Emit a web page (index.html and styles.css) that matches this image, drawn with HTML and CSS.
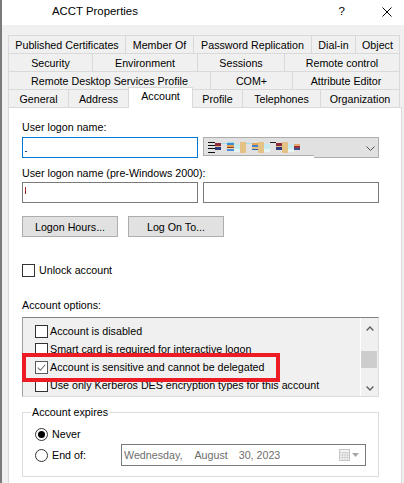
FILE: index.html
```html
<!DOCTYPE html>
<html>
<head>
<meta charset="utf-8">
<link rel="stylesheet" href="styles.css">
</head>
<body>
<div class="window">
  <header class="titlebar">
    <span class="title">ACCT Properties</span>
    <span class="help">?</span>
    <svg class="close" viewBox="0 0 10 10"><path d="M0.5 0.5L9.5 9.5M9.5 0.5L0.5 9.5" stroke="#000" stroke-width="1" fill="none"/></svg>
  </header>

  <div class="tabs">
    <div class="tabrow r1">
      <div class="tab">Published Certificates</div>
      <div class="tab">Member Of</div>
      <div class="tab">Password Replication</div>
      <div class="tab">Dial-in</div>
      <div class="tab">Object</div>
    </div>
    <div class="tabrow r2">
      <div class="tab">Security</div>
      <div class="tab">Environment</div>
      <div class="tab">Sessions</div>
      <div class="tab">Remote control</div>
    </div>
    <div class="tabrow r3">
      <div class="tab">Remote Desktop Services Profile</div>
      <div class="tab">COM+</div>
      <div class="tab">Attribute Editor</div>
    </div>
    <div class="tabrow r4">
      <div class="tab">General</div>
      <div class="tab">Address</div>
      <div class="tab active">Account</div>
      <div class="tab">Profile</div>
      <div class="tab">Telephones</div>
      <div class="tab">Organization</div>
    </div>
  </div>

  <div class="panel">
    <div class="label">User logon name:</div>
    <div class="field-row">
      <div class="input focus"><span class="mark-blue"></span></div>
      <div class="combo">
        <div class="redact">
          <span class="px px-menu"></span>
          <span class="px px-rn"></span>
          <span class="px px-line"></span>
          <span class="px px-st"></span>
          <span class="px px-cy"></span>
          <span class="px px-tan"></span>
          <span class="px px-line"></span>
          <span class="px px-st2"></span>
          <span class="px px-tan"></span>
          <span class="px px-cy"></span>
          <span class="px px-top"></span>
          <span class="px px-rn"></span>
          <span class="px px-tan"></span>
          <span class="px px-cy"></span>
          <span class="px px-rn2"></span>
        </div>
        <svg class="combo-chev" viewBox="0 0 9 5"><path d="M0.5 0.5L4.5 4.5L8.5 0.5" fill="none" stroke="#505050" stroke-width="1"/></svg>
        <span class="combo-notch"></span>
      </div>
    </div>

    <div class="label label-2">User logon name (pre-Windows 2000):</div>
    <div class="field-row row-2">
      <div class="input"><span class="mark-red"></span></div>
      <div class="input"></div>
    </div>

    <div class="btn-row">
      <div class="btn">Logon Hours...</div>
      <div class="btn">Log On To...</div>
    </div>

    <div class="check-row">
      <span class="chk"></span>
      <span class="check-text">Unlock account</span>
    </div>

    <div class="label label-opts">Account options:</div>
    <div class="listbox">
      <div class="items">
        <div class="item"><span class="chk small"></span><span class="item-text">Account is disabled</span></div>
        <div class="item"><span class="chk small"></span><span class="item-text">Smart card is required for interactive logon</span></div>
        <div class="item"><span class="chk small checked"><svg viewBox="0 0 12 12"><path d="M2 6.2L4.8 9L10 3" fill="none" stroke="#6a6a6a" stroke-width="1.1"/></svg></span><span class="item-text">Account is sensitive and cannot be delegated</span></div>
        <div class="item"><span class="chk small"></span><span class="item-text">Use only Kerberos DES encryption types for this account</span></div>
      </div>
      <div class="scroll">
        <div class="sb-up"><svg viewBox="0 0 8 5"><path d="M0.6 4.4L4 1L7.4 4.4" fill="none" stroke="#606060" stroke-width="1.4"/></svg></div>
        <div class="sb-track"><div class="sb-thumb"></div></div>
        <div class="sb-down"><svg viewBox="0 0 8 5"><path d="M0.6 0.6L4 4L7.4 0.6" fill="none" stroke="#606060" stroke-width="1.4"/></svg></div>
      </div>
      <div class="highlight"></div>
    </div>

    <fieldset class="group">
      <legend class="legend">Account expires</legend>
      <div class="radio-row">
        <span class="radio on"></span>
        <span class="radio-text">Never</span>
      </div>
      <div class="radio-row row-end">
        <div class="end-label">
          <span class="radio"></span>
          <span class="radio-text">End of:</span>
        </div>
        <div class="date">
          <span>Wednesday,</span>
          <span class="d-month">August</span>
          <span class="d-day">30, 2023</span>
          <svg class="cal" viewBox="0 0 11 12">
            <rect x="0.5" y="0.5" width="10" height="11" fill="#f3f3f3" stroke="#c6c6c6"/>
            <path d="M1 3.5H10M1 6H10M1 8.5H10M3.5 3V11M6 3V11M8.5 3V11" stroke="#d4d4d4" stroke-width="1" fill="none"/>
          </svg>
          <svg class="drop" viewBox="0 0 7 4"><path d="M0 0H7L3.5 4Z" fill="#a6a6a6"/></svg>
        </div>
      </div>
    </fieldset>
  </div>
</div>
</body>
</html>
```

FILE: styles.css
```css
html, body {
  margin: 0;
  padding: 0;
}
body {
  width: 404px;
  height: 483px;
  overflow: hidden;
  background: #f0f0f0;
  font-family: "Liberation Sans", Arial, sans-serif;
  font-size: 10.7px;
  color: #000;
}
.window {
  height: 483px;
  box-sizing: border-box;
  border-left: 2px solid #7a7a7a;
}

/* title bar */
.titlebar {
  height: 25px;
  background: #fff;
  display: flex;
  align-items: flex-start;
  line-height: 22px;
  font-size: 11.4px;
}
.title {
  margin-left: 50px;
}
.help {
  margin-left: auto;
  margin-right: 37px;
  font-size: 11.5px;
}
.close {
  width: 10px;
  height: 10px;
  margin-top: 7px;
  margin-right: 12px;
}

/* tabs */
.tabs {
  margin: 10px 0 0 6px;
  width: 392px;
}
.tabrow {
  display: grid;
  height: 18px;
}
.r1 { grid-template-columns: 117px 68px 118px 44px 45px; }
.r2 { grid-template-columns: 84px 105px 87px 116px; }
.r3 { grid-template-columns: 202px 82px 108px; }
.r4 { grid-template-columns: 60px 60px 64px 50px 78px 80px; }
.tab {
  box-sizing: border-box;
  border-top: 1px solid #d9d9d9;
  border-left: 1px solid #d9d9d9;
  text-align: center;
  line-height: 18px;
  white-space: nowrap;
  overflow: hidden;
}
.tab:last-child {
  border-right: 1px solid #d9d9d9;
}
.tab.active {
  position: relative;
  z-index: 1;
  background: #fff;
  margin-top: -2px;
  margin-right: -1px;
  height: 21px;
  border-right: 1px solid #d9d9d9;
  line-height: 17px;
}

/* panel */
.panel {
  margin-left: 6px;
  width: 394px;
  height: 390px;
  box-sizing: border-box;
  border: 1px solid #d9d9d9;
  background: #fff;
  padding: 13px 0 0 13px;
}
.label {
  height: 13px;
  line-height: 13px;
  white-space: nowrap;
}
.label-2 { margin-top: 9px; }
.label-opts { margin-top: 22px; }

.field-row {
  display: flex;
  gap: 5px;
  margin-top: 3px;
}
.field-row.row-2 { margin-top: 2px; }
.input {
  width: 176px;
  height: 21px;
  box-sizing: border-box;
  border: 1px solid #7a7a7a;
  background: #fff;
  position: relative;
}
.input.focus { border-color: #0078d7; }
.mark-blue {
  display: block;
  width: 2px;
  height: 1px;
  margin: 13px 0 0 2px;
  background: #1b3f8f;
}
.mark-red {
  display: block;
  width: 1px;
  height: 7px;
  margin: 4px 0 0 2px;
  background: #9b2a2a;
}

.combo {
  position: relative;
  width: 176px;
  height: 21px;
  box-sizing: border-box;
  border: 1px solid #adadad;
  background: #e1e1e1;
  display: flex;
  align-items: center;
}
.redact {
  display: flex;
  align-items: flex-start;
  height: 12px;
  margin-left: 4px;
  margin-top: 1px;
}
.px {
  display: block;
  width: 6px;
  height: 11px;
}
.px-menu {
  width: 7px;
  background: linear-gradient(#111 0 1px, transparent 1px 3px, #111 3px 4px, transparent 4px 6px, #111 6px 7px, transparent 7px 10px, #111 10px 11px);
}
.px-rn {
  background: linear-gradient(transparent 0 1px, #8a2b37 1px 4px, #e6b784 4px 5px, #2c3c7c 5px 8px, transparent 8px);
}
.px-rn2 {
  background: linear-gradient(transparent 0 2px, #e3a76d 2px 4px, #9a2f3b 4px 6px, #3a4a8a 6px 8px, transparent 8px);
}
.px-line {
  background: linear-gradient(transparent 0 1px, #a7dbe8 1px 2px, transparent 2px);
}
.px-st {
  width: 7px;
  background: linear-gradient(#a7dbe8 0 1px, #3b8ad0 1px 3px, #e9a24c 3px 5px, #8c3b2b 5px 6px, #f1d8a6 6px 7px, #4a90d6 7px 9px, transparent 9px);
}
.px-st2 {
  background: linear-gradient(transparent 0 1px, #e9a24c 1px 3px, #4a7fd0 3px 5px, #e0c08a 5px 7px, #2f5fa0 7px 8px, transparent 8px);
}
.px-cy {
  background: linear-gradient(transparent 0 2px, #c6eaee 2px 7px, #e6f5f3 7px 10px, transparent 10px);
}
.px-tan {
  background: #e4c286;
}
.px-top {
  background: linear-gradient(#222 0 1px, transparent 1px);
}
.combo-chev {
  width: 9px;
  height: 5px;
  margin-left: auto;
  margin-right: 3px;
  margin-top: 1px;
}
.combo-notch {
  position: absolute;
  left: -1px;
  bottom: -1px;
  width: 111px;
  height: 2px;
  background: #fff;
  border-top: 1px solid #adadad;
}

/* buttons */
.btn-row {
  display: flex;
  gap: 10px;
  margin-top: 13px;
}
.btn {
  width: 96px;
  height: 21px;
  box-sizing: border-box;
  border: 1px solid #adadad;
  background: #e1e1e1;
  display: flex;
  align-items: center;
  justify-content: center;
  white-space: nowrap;
}

/* checkboxes */
.check-row {
  display: flex;
  align-items: center;
  height: 13px;
  margin-top: 27px;
}
.chk {
  display: block;
  width: 13px;
  height: 13px;
  box-sizing: border-box;
  border: 1px solid #333;
  background: #fff;
  flex: none;
}
.chk.checked {
  border-color: #5a5a5a;
}
.chk svg {
  display: block;
  width: 11px;
  height: 11px;
}
.check-text {
  margin-left: 4px;
  line-height: 13px;
}

/* list */
.listbox {
  position: relative;
  margin-top: 5px;
  width: 357px;
  height: 80px;
  box-sizing: border-box;
  border: 1px solid;
  border-color: #828282 #dcdcdc #dcdcdc #a0a0a0;
  background: #f0f0f0;
  display: flex;
}
.items {
  flex: 1;
  padding-top: 4px;
  overflow: hidden;
}
.item {
  display: flex;
  align-items: center;
  height: 18px;
  padding-left: 12px;
  white-space: nowrap;
}
.item-text {
  margin-left: 2px;
  line-height: 18px;
}
.scroll {
  width: 17px;
  border-left: 1px solid #fff;
  display: flex;
  flex-direction: column;
  background: #f0f0f0;
}
.sb-up, .sb-down {
  height: 17px;
  display: flex;
  justify-content: center;
}
.sb-up svg, .sb-down svg {
  width: 8px;
  height: 5px;
}
.sb-up svg { margin-top: 8px; }
.sb-down svg { margin-top: 7px; }
.sb-track {
  flex: 1;
}
.sb-thumb {
  margin-top: 16px;
  height: 17px;
  margin-right: 1px;
  background: #cdcdcd;
}
.highlight {
  position: absolute;
  left: -1px;
  top: 35px;
  width: 258px;
  height: 29px;
  box-sizing: border-box;
  border: 4px solid #ed1c24;
  z-index: 2;
}

/* account expires group */
.group {
  margin: 9px 0 0 0;
  padding: 0 0 10px 0;
  width: 357px;
  box-sizing: border-box;
  border: 1px solid #dcdcdc;
  min-width: 0;
}
.legend {
  margin-left: 8px;
  padding: 0 1px;
  line-height: 13px;
}
.radio-row {
  display: flex;
  align-items: center;
  height: 13px;
  padding-left: 12px;
  margin-top: 9px;
}
.radio-row.row-end {
  height: 22px;
  margin-top: 3px;
}
.end-label {
  display: flex;
  align-items: center;
  width: 86px;
}
.radio {
  width: 13px;
  height: 13px;
  box-sizing: border-box;
  border: 1px solid #333;
  border-radius: 50%;
  background: #fff;
  display: flex;
  align-items: center;
  justify-content: center;
  flex: none;
}
.radio.on::after {
  content: "";
  width: 7px;
  height: 7px;
  border-radius: 50%;
  background: #000;
}
.radio-text {
  margin-left: 4px;
  line-height: 13px;
}
.date {
  width: 245px;
  height: 22px;
  box-sizing: border-box;
  border: 1px solid #7a7a7a;
  background: #fff;
  color: #6d6d6d;
  display: flex;
  align-items: center;
  padding-left: 2px;
  white-space: nowrap;
}
.d-month { margin-left: 12px; }
.d-day { margin-left: 11px; }
.cal {
  width: 11px;
  height: 12px;
  margin-left: auto;
  margin-top: -1px;
}
.drop {
  width: 7px;
  height: 4px;
  margin-left: 2px;
  margin-right: 6px;
}
```
